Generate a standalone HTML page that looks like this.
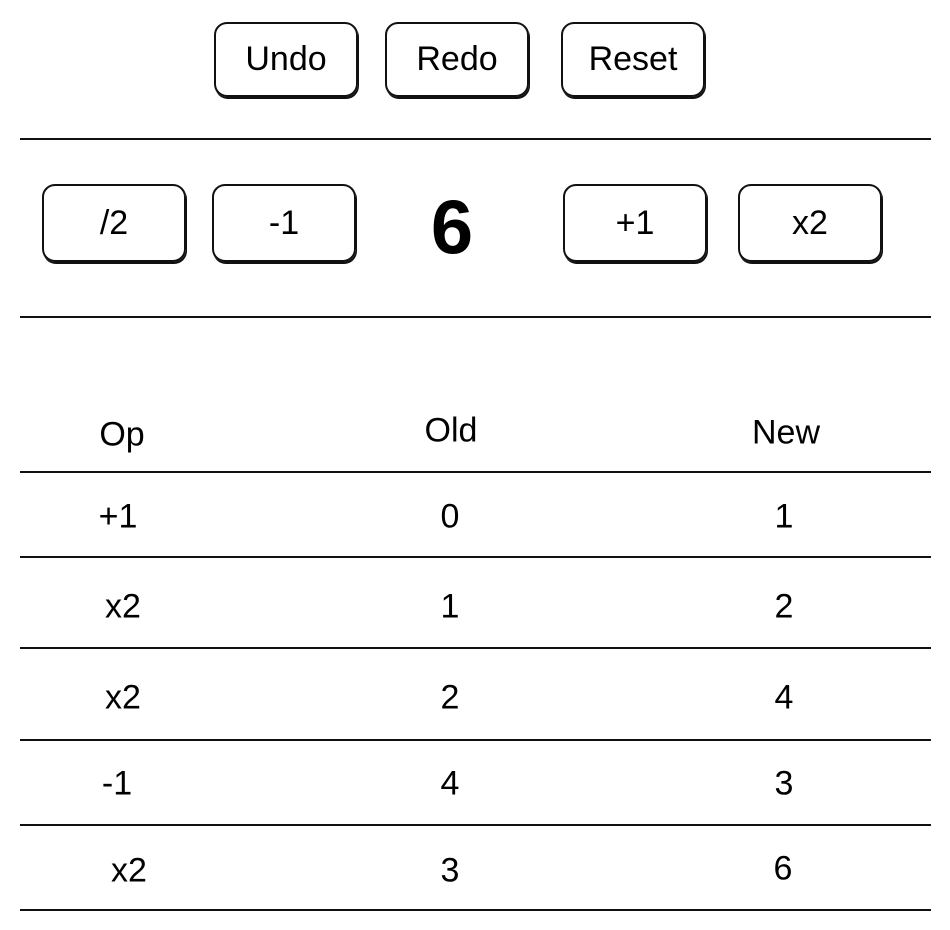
<!DOCTYPE html>
<html><head><meta charset="utf-8"><style>
html,body{margin:0;padding:0;background:#fff;width:950px;height:930px;overflow:hidden;font-family:"Liberation Sans",sans-serif;color:#000}
.b{position:absolute;border:2px solid #111;border-radius:13px;box-sizing:border-box;display:flex;align-items:center;justify-content:center;font-size:34px;box-shadow:1px 2px 0 #111}
.l{position:absolute;left:20px;width:911px;height:2px;background:#111}
.t{position:absolute;font-size:34px;transform:translate(-50%,-50%);white-space:nowrap}
</style></head><body>
<div class="b" style="left:214px;top:22px;width:144px;height:75px">Undo</div>
<div class="b" style="left:385px;top:22px;width:144px;height:75px">Redo</div>
<div class="b" style="left:561px;top:22px;width:144px;height:75px">Reset</div>
<div class="l" style="top:138px"></div>
<div class="b" style="left:42px;top:184px;width:144px;height:78px">/2</div>
<div class="b" style="left:212px;top:184px;width:144px;height:78px">-1</div>
<div class="t" style="left:452px;top:228px;font-size:76px;font-weight:bold">6</div>
<div class="b" style="left:563px;top:184px;width:144px;height:78px">+1</div>
<div class="b" style="left:738px;top:184px;width:144px;height:78px">x2</div>
<div class="l" style="top:316px"></div>
<div class="t" style="left:122px;top:435px">Op</div>
<div class="t" style="left:451px;top:431px">Old</div>
<div class="t" style="left:786px;top:433px">New</div>
<div class="l" style="top:471px"></div>
<div class="t" style="left:118px;top:517px">+1</div><div class="t" style="left:450px;top:517px">0</div><div class="t" style="left:784px;top:517px">1</div>
<div class="l" style="top:556px"></div>
<div class="t" style="left:123px;top:607px">x2</div><div class="t" style="left:450px;top:607px">1</div><div class="t" style="left:784px;top:607px">2</div>
<div class="l" style="top:647px"></div>
<div class="t" style="left:123px;top:698px">x2</div><div class="t" style="left:450px;top:698px">2</div><div class="t" style="left:784px;top:698px">4</div>
<div class="l" style="top:739px"></div>
<div class="t" style="left:117px;top:784px">-1</div><div class="t" style="left:450px;top:784px">4</div><div class="t" style="left:784px;top:784px">3</div>
<div class="l" style="top:824px"></div>
<div class="t" style="left:129px;top:871px">x2</div><div class="t" style="left:450px;top:871px">3</div><div class="t" style="left:783px;top:869px">6</div>
<div class="l" style="top:909px"></div>
</body></html>
